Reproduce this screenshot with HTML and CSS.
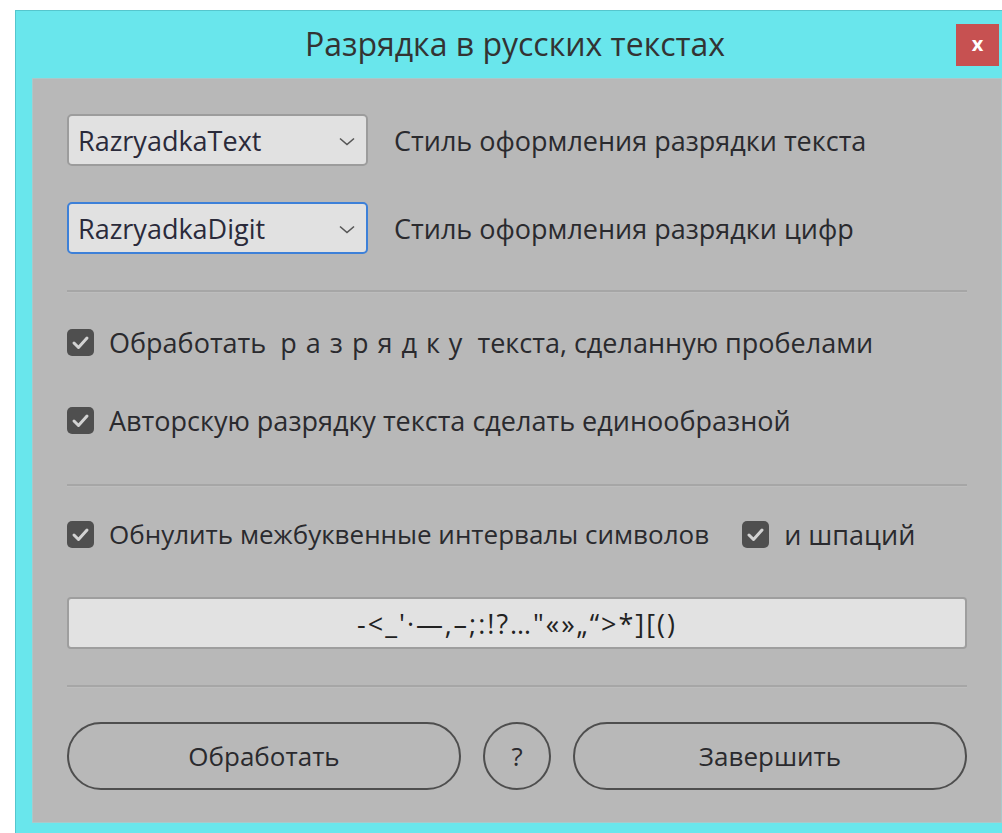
FILE: index.html
```html
<!DOCTYPE html>
<html lang="ru">
<head>
<meta charset="utf-8">
<title>Разрядка в русских текстах</title>
<link rel="stylesheet" href="styles.css">
</head>
<body>
<div class="window">
  <div class="titlebar">
    <div class="title">Разрядка в русских текстах</div>
    <div class="close">x</div>
  </div>
  <div class="panel">
    <div class="style-row">
      <div class="select">
        <span class="select-value">RazryadkaText</span>
        <svg class="chevron" width="16" height="9" viewBox="0 0 16 9"><path d="M1 1.5 L8 7.5 L15 1.5" fill="none" stroke="#555" stroke-width="1.6"/></svg>
      </div>
      <span class="label">Стиль оформления разрядки текста</span>
    </div>
    <div class="style-row second">
      <div class="select focused">
        <span class="select-value">RazryadkaDigit</span>
        <svg class="chevron" width="16" height="9" viewBox="0 0 16 9"><path d="M1 1.5 L8 7.5 L15 1.5" fill="none" stroke="#555" stroke-width="1.6"/></svg>
      </div>
      <span class="label">Стиль оформления разрядки цифр</span>
    </div>

    <div class="sep sep-1"></div>

    <label class="check-row row-1">
      <span class="box"><svg width="27" height="27" viewBox="0 0 27 27"><path d="M7 14 L11.5 18.5 L20 9" fill="none" stroke="#d2d2d2" stroke-width="3" stroke-linecap="round" stroke-linejoin="round"/></svg></span>
      <span class="check-text">Обработать&nbsp; <span class="spaced">р а з р я д к у</span>&nbsp; текста, сделанную пробелами</span>
    </label>
    <label class="check-row row-2">
      <span class="box"><svg width="27" height="27" viewBox="0 0 27 27"><path d="M7 14 L11.5 18.5 L20 9" fill="none" stroke="#d2d2d2" stroke-width="3" stroke-linecap="round" stroke-linejoin="round"/></svg></span>
      <span class="check-text">Авторскую разрядку текста сделать единообразной</span>
    </label>

    <div class="sep sep-2"></div>

    <div class="pair-row">
      <label class="check-row">
        <span class="box"><svg width="27" height="27" viewBox="0 0 27 27"><path d="M7 14 L11.5 18.5 L20 9" fill="none" stroke="#d2d2d2" stroke-width="3" stroke-linecap="round" stroke-linejoin="round"/></svg></span>
        <span class="check-text narrow">Обнулить межбуквенные интервалы символов</span>
      </label>
      <label class="check-row">
        <span class="box"><svg width="27" height="27" viewBox="0 0 27 27"><path d="M7 14 L11.5 18.5 L20 9" fill="none" stroke="#d2d2d2" stroke-width="3" stroke-linecap="round" stroke-linejoin="round"/></svg></span>
        <span class="check-text">и шпаций</span>
      </label>
    </div>

    <div class="field">-&lt;_'·—‚–;:!?…"«»„“&gt;*][()</div>

    <div class="sep sep-3"></div>

    <div class="buttons">
      <div class="btn wide">Обработать</div>
      <div class="btn round">?</div>
      <div class="btn wide">Завершить</div>
    </div>
  </div>
</div>
</body>
</html>
```
FILE: styles.css
```css
html, body {
  margin: 0;
  padding: 0;
  background: #ffffff;
  overflow: hidden;
  height: 833px;
}

body {
  font-family: "Open Sans", "Noto Sans", sans-serif;
  color: #2a2a2e;
}

.window {
  margin: 10px 0 0 15px;
  width: 1004px;
  background: #69e6ec;
  border: 1px solid #55c6cd;
  box-sizing: border-box;
  padding: 0 16px 16px 16px;
}

.titlebar {
  height: 67px;
  display: flex;
  align-items: center;
  justify-content: center;
  position: relative;
}

.title {
  font-size: 32px;
  color: #333;
  margin-left: -4px;
  margin-top: -3px;
}

.close {
  position: absolute;
  right: 3px;
  top: 13px;
  width: 43px;
  height: 42px;
  background: #c75151;
  color: #fff;
  font-weight: bold;
  font-size: 20px;
  display: flex;
  align-items: center;
  justify-content: center;
  line-height: 1;
  padding-bottom: 3px;
  box-sizing: border-box;
}

.panel {
  background: #b8b8b8;
  border: 1px solid #a9c9cb;
  height: 745px;
  box-sizing: border-box;
  padding: 35px 34px 0 34px;
  display: flex;
  flex-direction: column;
  font-size: 27px;
}

.style-row {
  display: flex;
  align-items: center;
  gap: 26px;
  height: 52px;
}

.style-row.second {
  margin-top: 36px;
}

.select {
  width: 301px;
  height: 52px;
  box-sizing: border-box;
  background: #e1e1e1;
  border: 2px solid #9c9c9c;
  border-radius: 5px;
  display: flex;
  align-items: center;
  justify-content: space-between;
  padding: 0 11px 0 9px;
}

.select.focused {
  border-color: #3d80d8;
}

.select-value {
  color: #2a2a3a;
}

.chevron {
  margin-top: 2px;
}

.label {
  color: #2a2a2e;
}

.sep {
  height: 2px;
  background: #a6a6a6;
  border-bottom: 1px solid #bdbdbd;
}

.sep-1 { margin-top: 36px; }
.sep-2 { margin-top: 49px; }
.sep-3 { margin-top: 36px; }

.check-row {
  display: flex;
  align-items: center;
  gap: 15px;
  height: 30px;
}

.row-1 { margin-top: 34px; }
.row-2 { margin-top: 48px; }

.spaced {
  letter-spacing: 1px;
}

.narrow {
  font-size: 26px;
}

.box {
  width: 27px;
  height: 27px;
  border-radius: 5px;
  background: #4f4f4f;
  flex: none;
  display: block;
}

.box svg {
  display: block;
}

.pair-row {
  display: flex;
  align-items: center;
  gap: 33px;
  margin-top: 32px;
}

.field {
  margin-top: 48px;
  height: 52px;
  box-sizing: border-box;
  background: #e2e2e2;
  border: 2px solid #9e9e9e;
  border-radius: 4px;
  display: flex;
  align-items: center;
  justify-content: center;
  color: #222;
  letter-spacing: 2px;
}

.buttons {
  margin-top: 34px;
  display: flex;
  gap: 22px;
}

.btn {
  height: 68px;
  box-sizing: border-box;
  border: 2px solid #4e4e4e;
  border-radius: 34px;
  display: flex;
  align-items: center;
  justify-content: center;
  color: #2a2a2e;
  font-size: 26px;
}

.btn.wide {
  flex: 1;
}

.btn.round {
  width: 68px;
  flex: none;
}
```
